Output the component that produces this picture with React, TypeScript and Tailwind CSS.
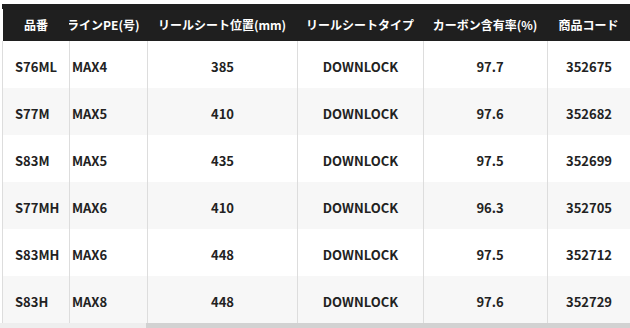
import { FC } from "react";

type Row = {
  code: string;
  line: string;
  seat: string;
  type: string;
  carbon: string;
  item: string;
};

const rows: Row[] = [
  { code: "S76ML", line: "MAX4", seat: "385", type: "DOWNLOCK", carbon: "97.7", item: "352675" },
  { code: "S77M", line: "MAX5", seat: "410", type: "DOWNLOCK", carbon: "97.6", item: "352682" },
  { code: "S83M", line: "MAX5", seat: "435", type: "DOWNLOCK", carbon: "97.5", item: "352699" },
  { code: "S77MH", line: "MAX6", seat: "410", type: "DOWNLOCK", carbon: "96.3", item: "352705" },
  { code: "S83MH", line: "MAX6", seat: "448", type: "DOWNLOCK", carbon: "97.5", item: "352712" },
  { code: "S83H", line: "MAX8", seat: "448", type: "DOWNLOCK", carbon: "97.6", item: "352729" },
];

const cols = "grid grid-cols-[67px_78px_150px_126px_124px_83px]";

const App: FC = () => {
  return (
    <div
      className="w-[630px] h-[328px] bg-white pt-[4px] pl-[2px] overflow-hidden"
      style={{ fontFamily: '"Noto Sans CJK JP", "Noto Sans", sans-serif' }}
    >
      <div className={`${cols} h-[37px] pt-[5px] bg-[#1f1f1f] text-white text-[12px] font-bold`}>
        <div className="flex items-center justify-center border-l border-white">品番</div>
        <div className="flex items-center overflow-hidden whitespace-nowrap">
          <span className="-ml-[2px]">ラインPE(号)</span>
        </div>
        <div className="flex items-center justify-center whitespace-nowrap">リールシート位置(mm)</div>
        <div className="flex items-center justify-center whitespace-nowrap">リールシートタイプ</div>
        <div className="flex items-center justify-center whitespace-nowrap">カーボン含有率(%)</div>
        <div className="flex items-center justify-center whitespace-nowrap">商品コード</div>
      </div>

      {rows.map((r, i) => (
        <div
          key={r.code}
          className={`${cols} h-[47px] text-[13px] font-bold text-[#222] ${
            i % 2 === 1 ? "bg-[#f7f7f7]" : "bg-white"
          }`}
        >
          <div className="flex items-center pl-[12px] pt-[4px] border-l border-[#dddddd]">{r.code}</div>
          <div className="flex items-center pl-[2px] pt-[4px] border-l border-[#dddddd]">{r.line}</div>
          <div className="flex items-center justify-center pt-[4px] border-l border-[#dddddd]">{r.seat}</div>
          <div className="flex items-center justify-center pt-[4px] border-l border-[#dddddd]">{r.type}</div>
          <div className="flex items-center justify-center pt-[4px] pl-[9px] border-l border-[#dddddd]">{r.carbon}</div>
          <div className="flex items-center justify-center pt-[4px] border-l border-[#dddddd]">{r.item}</div>
        </div>
      ))}

      <div className="-ml-[2px] h-[5px] bg-[#eeeeee] flex">
        <div className="ml-[146px] flex-1 bg-[#d2d2d2]" />
      </div>
    </div>
  );
};

export default App;
